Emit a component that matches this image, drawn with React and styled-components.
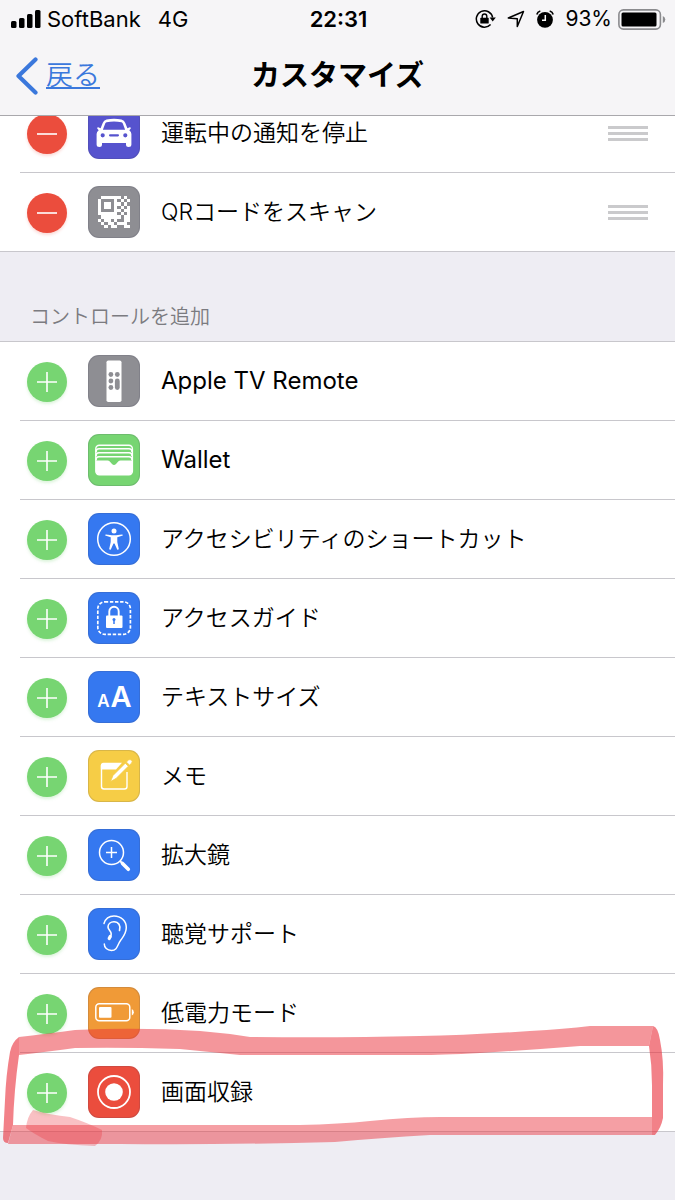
import React, { useState } from "react";
import styled, { createGlobalStyle } from "styled-components";

const GlobalStyle = createGlobalStyle`
  * {
    box-sizing: border-box;
  }

  body {
    margin: 0;
    background-color: #eeedf3;
    font-family: Inter, "Noto Sans CJK JP", sans-serif;
    color: #000;
  }
`;

const Screen = styled.div`
  min-height: 100vh;
  overflow: hidden;
`;

const Header = styled.header`
  position: sticky;
  top: 0;
  z-index: 2;
  height: 116px;
  background-color: #f6f5f7;
  border-bottom: 1px solid #a9a8ac;
`;

const StatusBar = styled.div`
  display: grid;
  grid-template-columns: 1fr auto 1fr;
  align-items: center;
  height: 38px;
  padding: 0 9px 0 11px;
  font-size: 22px;
  line-height: 38px;
`;

const StatusGroup = styled.div`
  display: flex;
  align-items: center;
  justify-content: ${(props) => (props.$end ? "flex-end" : "flex-start")};
  gap: ${(props) => (props.$end ? "11px" : "6px")};

  svg {
    flex: none;
  }
`;

const Network = styled.span`
  margin-left: 11px;
`;

const BatteryLevel = styled.div`
  display: flex;
  align-items: center;
  gap: 6px;
  font-size: 21px;
`;

const Clock = styled.time`
  font-weight: 600;
`;

const NavBar = styled.nav`
  display: grid;
  grid-template-columns: 1fr auto 1fr;
  align-items: center;
  height: 76px;
  padding: 0 15px;
`;

const BackLink = styled.a`
  display: flex;
  align-items: center;
  gap: 8px;
  color: #3b78dc;
  font-size: 27px;
  font-weight: 350;
  line-height: 40px;
  text-decoration: none;

  span {
    text-decoration: underline;
    text-decoration-thickness: 2px;
    text-underline-offset: 2px;
  }
`;

const Title = styled.h1`
  margin: 0;
  font-size: 29px;
  font-weight: 700;
  line-height: 40px;
`;

const List = styled.ul`
  position: relative;
  margin: 0;
  padding: 0;
  list-style: none;
  background-color: #fff;
  border-bottom: 1px solid #c8c7cc;
`;

/* 上の一覧はヘッダーの下に少しスクロールしている */
const ActiveList = styled(List)`
  margin-top: -22px;
`;

const AddList = styled(List)`
  border-top: 1px solid #c8c7cc;
`;

const Row = styled.li`
  display: flex;
  align-items: center;
  height: 79px;
  margin-left: 20px;
  padding: 0 27px 0 7px;
  border-bottom: 1px solid #c8c7cc;

  &:last-of-type {
    height: 78px;
    border-bottom: none;
  }
`;

const RoundButton = styled.button`
  flex: none;
  display: flex;
  width: 40px;
  height: 40px;
  margin-top: 2px;
  padding: 0;
  border: none;
  border-radius: 50%;
  background-color: ${(props) => (props.$remove ? "#eb4d3d" : "#77d572")};
  box-shadow: 0 2px 3px
    ${(props) => (props.$remove ? "rgba(235, 77, 61, 0.2)" : "rgba(119, 213, 114, 0.25)")};
  cursor: pointer;
`;

const IconTile = styled.span`
  flex: none;
  width: 52px;
  height: 52px;
  margin: 0 21px;
  border-radius: 11px;
  background-color: ${(props) => props.$color};
  box-shadow: inset 0 0 0 1px rgba(60, 60, 90, 0.16);

  svg {
    display: block;
  }
`;

const Label = styled.span`
  flex: 1;
  font-size: ${(props) => (props.$latin ? "24px" : "23px")};
  font-weight: ${(props) => (props.$latin ? 400 : 350)};
  line-height: 34px;
`;

const DragHandle = styled.button`
  display: flex;
  flex-direction: column;
  gap: 3px;
  width: 40px;
  padding: 0;
  border: none;
  background: none;
  cursor: grab;

  i {
    height: 3px;
    background-color: #cacacc;
  }
`;

const SectionTitle = styled.h2`
  height: 89px;
  margin: 0;
  padding: 50px 30px 0;
  color: #7b7b80;
  font-size: 20px;
  font-weight: 350;
  line-height: 30px;
`;

const Marker = styled.svg`
  position: absolute;
  left: 0;
  bottom: -19px;
  width: 100%;
  height: 125px;
  pointer-events: none;
`;

const CarIcon = () => (
  <svg width="52" height="52" viewBox="0 0 52 52" aria-hidden="true">
    <path
      fill="#fff"
      fillRule="evenodd"
      d="M18.500 12.500Q26 10.800 33.500 12.500Q36.300 13.200 37.300 16L39.400 21.200L41.800 20.300Q43 20.300 42.800 21.600L41.300 23.200Q43.400 24.800 43.400 27V37.500Q43.400 40 40.600 40Q38 40 38 37.500V36H14V37.500Q14 40 11.400 40Q8.600 40 8.600 37.500V27Q8.600 24.800 10.700 23.200L9.200 21.600Q9 20.300 10.200 20.300L12.600 21.200L14.700 16Q15.700 13.200 18.500 12.500ZM18.500 15.200Q17.600 15.500 17.200 16.600L14.900 22.800H37.100L34.800 16.600Q34.400 15.500 33.500 15.200Q26 13.700 18.500 15.200ZM14.700 26.200A2.100 2.100 0 1 0 14.700 30.400A2.100 2.100 0 1 0 14.700 26.200ZM37.300 26.200A2.100 2.100 0 1 0 37.300 30.400A2.100 2.100 0 1 0 37.300 26.200ZM22 27.200Q21 27.200 21 28.300Q21 29.400 22 29.400H30Q31 29.400 31 28.300Q31 27.200 30 27.200Z"
    />
  </svg>
);

const qrRows = [
  "0111111010",
  "1000010101",
  "1011011010",
  "1011010101",
  "1000011011",
  "1111110101",
  "0111111011",
  "1011010011",
  "0101101110",
  "0010110011",
];

const QrIcon = () => (
  <svg width="52" height="52" viewBox="-3 -3 16 16" shapeRendering="crispEdges" aria-hidden="true">
    {qrRows.map((row, y) =>
      row
        .split("")
        .map((cell, x) => cell === "1" && <rect key={`${x}-${y}`} x={x} y={y} width="1" height="1" fill="#fff" />)
    )}
  </svg>
);

const RemoteIcon = () => (
  <svg width="52" height="52" viewBox="0 0 52 52" aria-hidden="true">
    <rect x="18.500" y="5.500" width="15" height="41.500" rx="1.800" fill="#fff" />
    <g fill="#8e8e93">
      <circle cx="22.900" cy="19.500" r="2.400" />
      <circle cx="29.300" cy="19.500" r="2.400" />
      <circle cx="22.900" cy="26" r="2.400" />
      <circle cx="22.900" cy="32.500" r="2.400" />
      <rect x="26.900" y="23.600" width="4.800" height="11.300" rx="2.400" />
    </g>
  </svg>
);

const WalletIcon = () => (
  <svg width="52" height="52" viewBox="0 0 52 52" aria-hidden="true">
    <rect x="7.800" y="11.300" width="36.600" height="29.500" rx="3.500" fill="none" stroke="#fff" strokeWidth="1.400" />
    <path
      d="M8 18Q8 14.800 11 14.800H41Q44 14.800 44 18M8 22Q8 18.800 11 18.800H41Q44 18.800 44 22M8 26Q8 22.800 11 22.800H41Q44 22.800 44 26"
      fill="none"
      stroke="#fff"
      strokeWidth="1.500"
    />
    <path
      fill="#fff"
      d="M8 26.500H19.500Q20.800 26.500 21.800 27.600L24 30Q26 32 28 30L30.200 27.600Q31.200 26.500 32.500 26.500H44V37.500Q44 41 40.500 41H11.500Q8 41 8 37.500Z"
    />
  </svg>
);

const AccessibilityIcon = () => (
  <svg width="52" height="52" viewBox="0 0 52 52" aria-hidden="true">
    <circle cx="26" cy="26" r="16.300" fill="none" stroke="#fff" strokeWidth="1.500" />
    <circle cx="26" cy="18" r="2.500" fill="#fff" />
    <path
      fill="#fff"
      d="M18 21.500L24 22.300H28L34 21.500Q35 21.600 34.800 22.600L29.300 24.300V29L30.800 36Q30.400 37.200 29.200 36.600L26.500 30.500H25.500L22.800 36.600Q21.600 37.200 21.200 36L22.700 29V24.300L17.200 22.600Q17 21.600 18 21.500Z"
    />
  </svg>
);

const GuidedAccessIcon = () => (
  <svg width="52" height="52" viewBox="0 0 52 52" aria-hidden="true">
    <rect
      x="9.800"
      y="9.800"
      width="32.600"
      height="32.600"
      rx="7"
      fill="none"
      stroke="#fff"
      strokeWidth="1.700"
      strokeDasharray="3.400 1.700"
    />
    <path d="M21.300 24v-4.500a4.700 4.700 0 0 1 9.400 0v4.500" fill="none" stroke="#fff" strokeWidth="1.900" />
    <rect x="18" y="23.500" width="16.500" height="12.500" rx="1" fill="#fff" />
    <path d="M26 27.200v4.800" stroke="#3578f0" strokeWidth="1.500" />
    <circle cx="26" cy="27.600" r="1.500" fill="#3578f0" />
  </svg>
);

const TextSizeIcon = () => (
  <svg width="52" height="52" viewBox="0 0 52 52" aria-hidden="true">
    <g fill="#fff" fontFamily="Inter, sans-serif" fontWeight="600" textAnchor="middle">
      <text x="15.500" y="36" fontSize="17">
        A
      </text>
      <text x="33" y="36" fontSize="29">
        A
      </text>
    </g>
  </svg>
);

const MemoIcon = () => (
  <svg width="52" height="52" viewBox="0 0 52 52" aria-hidden="true">
    <path d="M39 22V36.500Q39 39 36.500 39H16Q13.500 39 13.500 36.500V15.500" fill="none" stroke="#fff" strokeWidth="1.400" />
    <path fill="#fff" d="M12.800 19.500V15.500Q12.800 12.700 15.600 12.700H34L28 19.500Z" />
    <path
      d="M22.500 31.500L25 25.500L37.300 13.200L40.300 16.200L28 28.500ZM38.400 12.100L40.500 10Q42 9 43.500 10.300Q44.800 11.700 43.700 13L41.500 15.100Z"
      fill="#fff"
      stroke="#f6cd46"
      strokeWidth="0.800"
    />
  </svg>
);

const MagnifierIcon = () => (
  <svg width="52" height="52" viewBox="0 0 52 52" aria-hidden="true">
    <circle cx="23.500" cy="23.500" r="12" fill="none" stroke="#fff" strokeWidth="1.500" />
    <path d="M23.500 18v11M18 23.500h11" stroke="#fff" strokeWidth="1.500" />
    <path d="M32 32l2.500 2.500" stroke="#fff" strokeWidth="1.800" />
    <path d="M34.500 34.500l5.800 5.800" stroke="#fff" strokeWidth="3.600" strokeLinecap="round" />
  </svg>
);

const EarIcon = () => (
  <svg width="52" height="52" viewBox="0 0 52 52" aria-hidden="true">
    <g fill="none" stroke="#fff" strokeLinecap="round">
      <path
        d="M16 15.500C17.500 10.500 21.500 8 26 8C33 8 38.300 13 38.300 19.500C38.300 25.500 35 29 32.500 32.500C29.500 36.500 29.500 42.500 23.500 42.500C19 42.500 16.300 39.500 16.300 36"
        strokeWidth="1.500"
      />
      <path
        d="M31.500 22.500C33 17.500 30.500 13.700 26 13.700C22.500 13.700 20 16 20 19C20 22 23.200 22.500 23.200 26C23.200 28 22.300 29 21.800 30"
        strokeWidth="1.600"
      />
      <path d="M21.200 30.500l1-2" strokeWidth="3.200" />
    </g>
  </svg>
);

const LowPowerIcon = () => (
  <svg width="52" height="52" viewBox="0 0 52 52" aria-hidden="true">
    <rect x="7.800" y="16.800" width="34" height="17" rx="3.500" fill="none" stroke="#fff" strokeWidth="1.500" />
    <rect x="11" y="20" width="12.500" height="10.700" rx="1" fill="#fff" />
    <path d="M43.800 22q2 1 2 3.300t-2 3.300z" fill="#fff" />
  </svg>
);

const RecordIcon = () => (
  <svg width="52" height="52" viewBox="0 0 52 52" aria-hidden="true">
    <circle cx="26" cy="26" r="16" fill="none" stroke="#fff" strokeWidth="1.800" />
    <circle cx="26" cy="26" r="8.800" fill="#fff" />
  </svg>
);

const SignalIcon = () => (
  <svg width="30" height="18" viewBox="0 0 30 18" aria-hidden="true">
    <rect x="0" y="11" width="5.500" height="7" rx="1.500" />
    <rect x="8" y="8" width="5.500" height="10" rx="1.500" />
    <rect x="16" y="4" width="5.500" height="14" rx="1.500" />
    <rect x="24" y="0" width="5.500" height="18" rx="1.500" />
  </svg>
);

const RotationLockIcon = () => (
  <svg width="21" height="20" viewBox="0 0 21 20" aria-hidden="true">
    <path d="M17.600 8.500A8.200 8.200 0 1 0 15.600 15.500" fill="none" stroke="#000" strokeWidth="1.500" />
    <path d="M14.600 8.500h6.200l-3.100 4z" />
    <rect x="5.300" y="8.800" width="8.400" height="5.700" rx="0.600" />
    <path d="M7.200 9V7.300a2.300 2.300 0 0 1 4.600 0V9" fill="none" stroke="#000" strokeWidth="1.400" />
  </svg>
);

const LocationIcon = () => (
  <svg width="18" height="18" viewBox="0 0 18 18" aria-hidden="true">
    <path d="M16.500 1.500L10.300 16.500V8.800L1.300 8Z" fill="none" stroke="#000" strokeWidth="1.500" strokeLinejoin="round" />
  </svg>
);

const AlarmIcon = () => (
  <svg width="18" height="18" viewBox="0 0 18 18" aria-hidden="true">
    <circle cx="9" cy="9.800" r="7.900" />
    <path d="M9.300 5v5.300H6" fill="none" stroke="#fff" strokeWidth="1.500" />
    <path d="M0.800 4.500Q1.500 1.800 4.300 1M17.200 4.500Q16.500 1.800 13.700 1" fill="none" stroke="#000" strokeWidth="1.600" />
  </svg>
);

const BatteryIcon = () => (
  <svg width="48" height="21" viewBox="0 0 48 21" aria-hidden="true">
    <rect x="0.900" y="0.900" width="41.500" height="19.200" rx="4.500" fill="none" stroke="#8b8b8e" strokeWidth="1.600" />
    <rect x="3.500" y="3.500" width="35" height="14" rx="1.500" />
    <path d="M44.800 7q2.500 1 2.500 3.500t-2.500 3.500z" fill="#8b8b8e" />
  </svg>
);

const BackIcon = () => (
  <svg width="23" height="38" viewBox="0 0 23 38" aria-hidden="true">
    <path
      d="M20.500 2.500L3.500 19L20.500 35.500"
      fill="none"
      stroke="#3b78dc"
      strokeWidth="4.200"
      strokeLinecap="round"
      strokeLinejoin="round"
    />
  </svg>
);

const activeControls = [
  { name: "運転中の通知を停止", color: "#5653ce", Icon: CarIcon },
  { name: "QRコードをスキャン", color: "#8e8e93", Icon: QrIcon },
];

const moreControls = [
  { name: "Apple TV Remote", color: "#8e8e93", Icon: RemoteIcon, latin: true },
  { name: "Wallet", color: "#77d572", Icon: WalletIcon, latin: true },
  { name: "アクセシビリティのショートカット", color: "#3578f0", Icon: AccessibilityIcon },
  { name: "アクセスガイド", color: "#3578f0", Icon: GuidedAccessIcon },
  { name: "テキストサイズ", color: "#3578f0", Icon: TextSizeIcon },
  { name: "メモ", color: "#f6cd46", Icon: MemoIcon },
  { name: "拡大鏡", color: "#3578f0", Icon: MagnifierIcon },
  { name: "聴覚サポート", color: "#3578f0", Icon: EarIcon },
  { name: "低電力モード", color: "#f09a37", Icon: LowPowerIcon },
  { name: "画面収録", color: "#eb4d3d", Icon: RecordIcon },
];

const ControlRow = ({ control, remove, onClick }) => {
  const { name, color, Icon, latin } = control;

  return (
    <Row>
      <RoundButton
        type="button"
        $remove={remove}
        aria-label={remove ? `${name}を削除` : `${name}を追加`}
        onClick={() => onClick(control)}
      >
        <svg width="40" height="40" viewBox="0 0 40 40" aria-hidden="true">
          <path d={remove ? "M10 20h20" : "M10 20h20M20 10v20"} stroke="#fff" strokeWidth="1.600" />
        </svg>
      </RoundButton>
      <IconTile $color={color}>
        <Icon />
      </IconTile>
      <Label $latin={latin}>{name}</Label>
      {remove && (
        <DragHandle type="button" aria-label={`${name}を並べ替え`}>
          <i />
          <i />
          <i />
        </DragHandle>
      )}
    </Row>
  );
};

const App = () => {
  const [active, setActive] = useState(activeControls);
  const [more, setMore] = useState(moreControls);

  const addControl = (control) => {
    setMore(more.filter((item) => item.name !== control.name));
    setActive([...active, control]);
  };

  const removeControl = (control) => {
    setActive(active.filter((item) => item.name !== control.name));
    setMore([...more, control]);
  };

  return (
    <>
      <GlobalStyle />
      <Screen>
        <Header>
          <StatusBar>
            <StatusGroup>
              <SignalIcon />
              <span>SoftBank</span>
              <Network>4G</Network>
            </StatusGroup>
            <Clock>22:31</Clock>
            <StatusGroup $end>
              <RotationLockIcon />
              <LocationIcon />
              <AlarmIcon />
              <BatteryLevel>
                <span>93%</span>
                <BatteryIcon />
              </BatteryLevel>
            </StatusGroup>
          </StatusBar>
          <NavBar>
            <BackLink href="#">
              <BackIcon />
              <span>戻る</span>
            </BackLink>
            <Title>カスタマイズ</Title>
          </NavBar>
        </Header>

        <ActiveList>
          {active.map((control) => (
            <ControlRow key={control.name} control={control} remove onClick={removeControl} />
          ))}
        </ActiveList>

        <SectionTitle>コントロールを追加</SectionTitle>

        <AddList>
          {more.map((control) => (
            <ControlRow key={control.name} control={control} onClick={addControl} />
          ))}
          {/* 最後の行を囲む手描きのマーカー */}
          <Marker viewBox="0 1025 675 125" preserveAspectRatio="none" aria-hidden="true">
            <g fill="#ea2d38">
              <path
                opacity="0.500"
                d="M19 1037Q45 1034 75 1030Q140 1027 200 1031Q225 1033 250 1037Q340 1038 420 1036Q470 1035 530 1031Q565 1029 590 1026H653L649 1046H580Q530 1050 480 1053Q440 1055 420 1055H240Q210 1052 180 1049Q120 1047 75 1048Q45 1052 19 1055Z"
              />
              <path
                opacity="0.600"
                d="M19 1037Q12 1042 10 1052Q6 1075 5 1100L3 1138Q3 1143 8 1143L13 1125Q14 1090 19 1055Z"
              />
              <path
                opacity="0.460"
                d="M13 1125H300Q340 1124 370 1121Q410 1117 440 1117H652V1135H430Q380 1138 335 1142Q220 1145 120 1144H8Z"
              />
              <path
                opacity="0.300"
                d="M33 1110Q50 1115 70 1117Q88 1123 102 1130Q103 1140 95 1146Q65 1145 48 1141Q34 1134 26 1128Q27 1117 33 1110Z"
              />
              <path
                opacity="0.600"
                d="M653 1026Q658 1027 660 1040Q664 1060 663 1085V1118Q661 1128 655 1135H652V1085Q652 1065 649 1046Z"
              />
            </g>
          </Marker>
        </AddList>
      </Screen>
    </>
  );
};

export default App;
